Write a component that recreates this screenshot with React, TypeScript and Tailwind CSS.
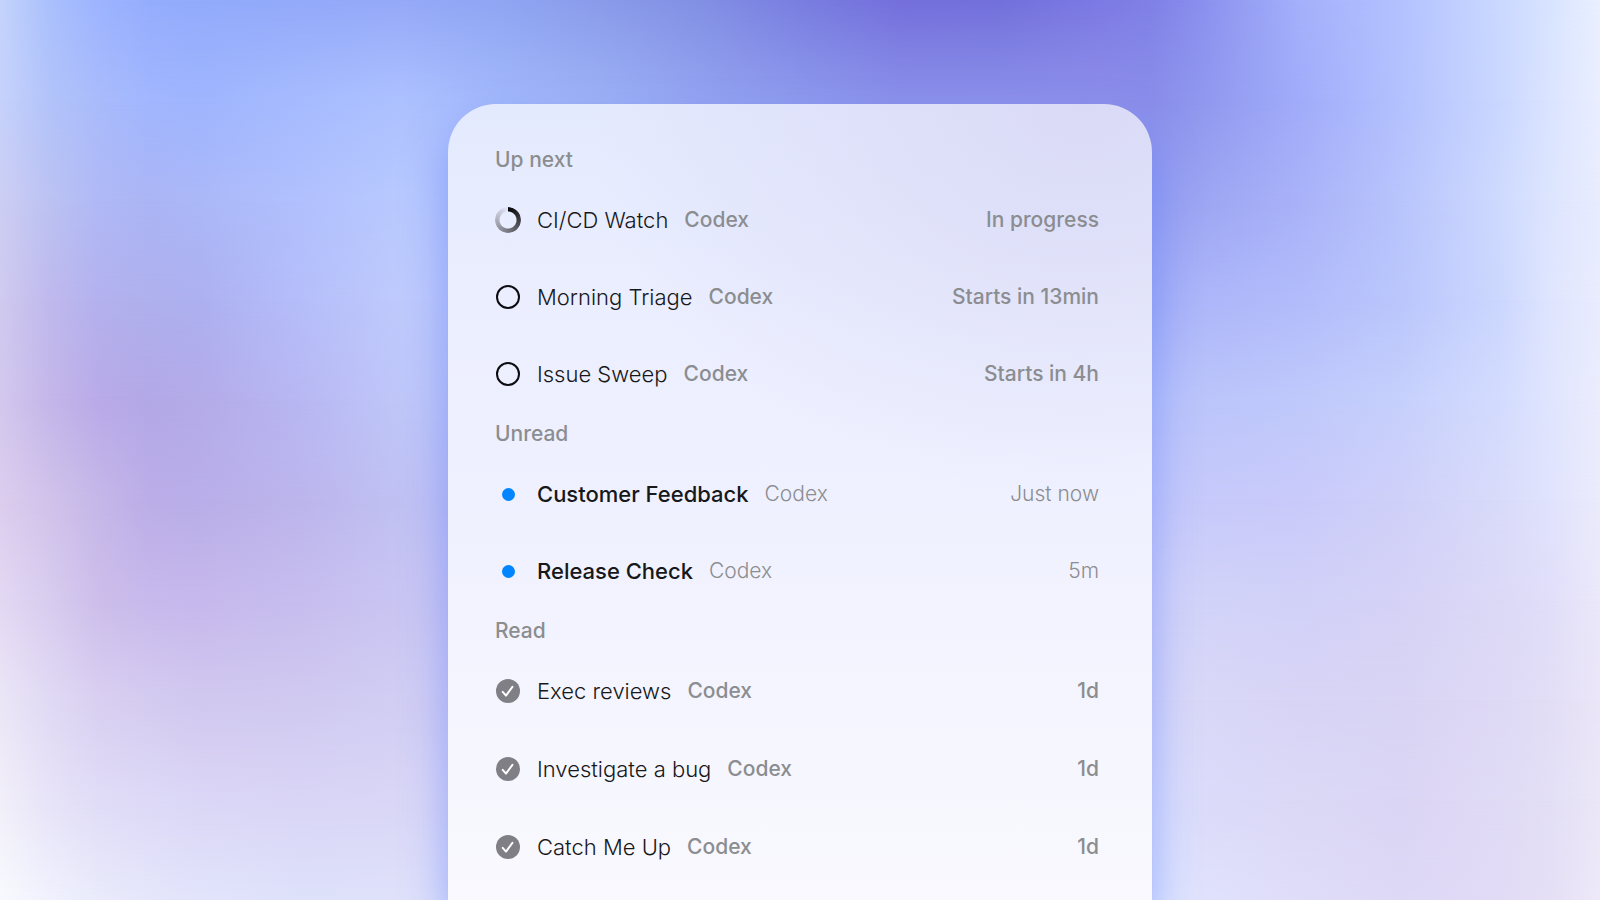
import * as React from 'react';

type Status = 'running' | 'scheduled' | 'unread' | 'read';

interface Task {
  name: string;
  source: string;
  time: string;
  status: Status;
}

interface Section {
  title: string;
  listStyle: string;
  tasks: Task[];
}

const sections: Section[] = [
  {
    title: 'Up next',
    listStyle: 'gap-px',
    tasks: [
      { name: 'CI/CD Watch', source: 'Codex', time: 'In progress', status: 'running' },
      { name: 'Morning Triage', source: 'Codex', time: 'Starts in 13min', status: 'scheduled' },
      { name: 'Issue Sweep', source: 'Codex', time: 'Starts in 4h', status: 'scheduled' },
    ],
  },
  {
    title: 'Unread',
    listStyle: 'gap-px',
    tasks: [
      { name: 'Customer Feedback', source: 'Codex', time: 'Just now', status: 'unread' },
      { name: 'Release Check', source: 'Codex', time: '5m', status: 'unread' },
    ],
  },
  {
    title: 'Read',
    listStyle: 'gap-0.5',
    tasks: [
      { name: 'Exec reviews', source: 'Codex', time: '1d', status: 'read' },
      { name: 'Investigate a bug', source: 'Codex', time: '1d', status: 'read' },
      { name: 'Catch Me Up', source: 'Codex', time: '1d', status: 'read' },
    ],
  },
];

// Backdrop mesh: evenly spaced bands, each a horizontal gradient that fades in
// over the one above it. Stops are 1/32ths of the width.
const leftStops = [0, 1, 2, 3, 4, 6, 8];
const middleStops = [10, 12, 14, 16, 18, 20, 22];
const rightStops = [23, 24, 26, 28, 30, 31, 32];

const bands = [
  {
    left: ['#c4d4fc', '#aac0fd', '#9db4ff', '#95adfd', '#92abfb', '#93aafa', '#95a9f8'],
    middle: ['#8fa6f3', '#8a9bea', '#8290e4', '#797ee0', '#746fdc', '#7270db', '#7c7ae4'],
    right: ['#8080e6', '#8a8fee', '#a4b1fb', '#b3c2ff', '#cbd9ff', '#d8e4ff', '#eaf0ff'],
  },
  {
    left: ['#c6d2fb', '#b2c3fa', '#a9bbfb', '#a1b6fe', '#9fb5fe', '#a6bbfe', '#adc1ff'],
    middle: ['#a2b7fa', '#9cb0f5', '#94a3f0', '#8d99ec', '#8b90e9', '#8c90e9', '#8d8ee9'],
    right: ['#8a8de9', '#8f97ee', '#a1acfa', '#b3c1fe', '#cad7ff', '#dbe4ff', '#eaeeff'],
  },
  {
    left: ['#cdcef4', '#bbc2f2', '#b0b9f6', '#abb5f5', '#abb8f8', '#b1c0fe', '#b8c9fe'],
    right: ['#949df0', '#9ca5f2', '#a9b2f8', '#b8c4fc', '#cedafe', '#dde5fe', '#e9ecfe'],
  },
  {
    left: ['#d0caef', '#bfb9ed', '#b3b1ee', '#afb0ed', '#adb0f0', '#b5befa', '#bfcafc'],
    right: ['#a3adf5', '#adb6f9', '#b2bcfb', '#bac6fc', '#ccd7fe', '#dfe5fe', '#e9ecfe'],
  },
  {
    left: ['#d3c8ee', '#c4b6e9', '#b9aae8', '#b3a8e7', '#b4abe9', '#b8b7f3', '#bfc7f8'],
    right: ['#b8c2fa', '#bbc5fa', '#bfc9fb', '#c6d0fc', '#d3dcfe', '#e0e5fe', '#ebecfd'],
  },
  {
    left: ['#dccdee', '#d0c2ea', '#c5b7e8', '#bbade7', '#b9aee8', '#bcb5ec', '#c0c1f3'],
    right: ['#c5c9fa', '#c6c9fa', '#c9cafa', '#cfd0f9', '#d9dbfa', '#e0e3fd', '#ebebfc'],
  },
  {
    left: ['#e3d8f3', '#d8ccef', '#ccbdea', '#c7b9ec', '#c6b8ec', '#c7bdee', '#c9c5f2'],
    right: ['#d3d3f8', '#d2d3f9', '#d1d1f8', '#d5d2f6', '#dcd9f7', '#e1def9', '#ebe8fa'],
  },
  {
    left: ['#ebe6f7', '#e0d9f4', '#d9cff1', '#d4cbf0', '#d1c8ef', '#d0c9f0', '#d1cdf3'],
    right: ['#d7d8f8', '#d9d8f7', '#d8d4f6', '#d9d4f4', '#ded9f5', '#e2def6', '#ebe6f8'],
  },
  {
    left: ['#f1eff9', '#e7e3f8', '#e0dcf7', '#ddd9f7', '#dbd6f6', '#d9d5f6', '#d9d6f6'],
    right: ['#dce0fc', '#dbdbfa', '#dbd8f6', '#dbd5f5', '#e0dbf5', '#e3dff6', '#ebe7f7'],
  },
  {
    left: ['#f8f9fe', '#f0f1fd', '#e9eafb', '#e5e6fb', '#e1e4fb', '#dee1fa', '#dfe1fa'],
    right: ['#dfe7ff', '#e0e2fc', '#dfdcf9', '#ddd8f6', '#e1dbf6', '#e4dff5', '#ede9f8'],
  },
];

const toStops = (colors: string[], stops: number[]) =>
  colors.map((color, i) => `${color} ${(stops[i] / 32) * 100}%`);

const Backdrop = () => {
  const step = 100 / (bands.length - 1);

  return (
    <div aria-hidden="true" className="absolute inset-0 -z-10 overflow-hidden">
      {bands.map(({ left, middle = [], right }, i) => {
        const stops = [
          ...toStops(left, leftStops),
          ...toStops(middle, middleStops),
          ...toStops(right, rightStops),
        ];
        return (
          <div
            key={i}
            className="absolute inset-0"
            style={{
              backgroundImage: `linear-gradient(to right, ${stops.join(', ')})`,
              maskImage: i
                ? `linear-gradient(to bottom, transparent ${(i - 1) * step}%, black ${i * step}%)`
                : undefined,
            }}
          />
        );
      })}
    </div>
  );
};

const StatusIcon = ({ status }: { status: Status }) => {
  if (status === 'running') {
    return (
      <span className="size-[26px] rounded-full bg-[conic-gradient(#050508,#77787f_50%,#e4e8fb)] [mask-image:radial-gradient(circle,transparent_8px,black_9px)]" />
    );
  }
  if (status === 'scheduled') {
    return <span className="size-6 rounded-full border-2 border-[#0c0c10]" />;
  }
  if (status === 'unread') {
    return <span className="size-[13px] rounded-full bg-[#0285ff]" />;
  }
  return (
    <svg viewBox="0 0 24 24" className="size-6">
      <circle cx="12" cy="12" r="12" fill="#7f7f85" />
      <path
        d="M6.7 12.9L10 16.6L16.4 7.8"
        fill="none"
        stroke="#fff"
        strokeWidth="2"
        strokeLinecap="round"
        strokeLinejoin="round"
      />
    </svg>
  );
};

const TaskRow = ({ task }: { task: Task }) => {
  const unread = task.status === 'unread';
  const metaStyle = unread ? 'font-light' : 'font-medium';

  return (
    <li className="flex h-[76px] items-center text-[21px] leading-7 whitespace-nowrap text-[#8b8d90]">
      <span className="mr-4 flex w-[26px] shrink-0 justify-center">
        <StatusIcon status={task.status} />
      </span>
      <span className={`text-[22px] text-[#17181a] ${unread ? 'font-medium' : 'font-light'}`}>
        {task.name}
      </span>
      <span className={`ml-4 ${metaStyle}`}>{task.source}</span>
      <span className={`ml-auto ${metaStyle}`}>{task.time}</span>
    </li>
  );
};

export default function App() {
  return (
    <div className="relative isolate flex min-h-screen flex-col items-center overflow-hidden pt-[104px] font-['Inter',sans-serif]">
      <Backdrop />
      <main className="w-full max-w-[704px] flex-1 rounded-t-[48px] bg-[radial-gradient(ellipse_70%_50%_at_90%_0%,#dadaf6,#dadaf600),linear-gradient(to_bottom,#e4eafe,#ecefff_30%,#f0f1ff_52%,#f9f9fe)] pt-[34px] pr-[53px] pl-[47px] shadow-[0_24px_44px_rgba(100,130,250,0.6)]">
        {sections.map(({ title, listStyle, tasks }) => (
          <section key={title}>
            <h2 className="flex h-11 items-center text-[21px] leading-7 font-medium text-[#8b8d90]">
              {title}
            </h2>
            <ul className={`flex flex-col ${listStyle}`}>
              {tasks.map((task) => (
                <TaskRow key={task.name} task={task} />
              ))}
            </ul>
          </section>
        ))}
      </main>
    </div>
  );
}
